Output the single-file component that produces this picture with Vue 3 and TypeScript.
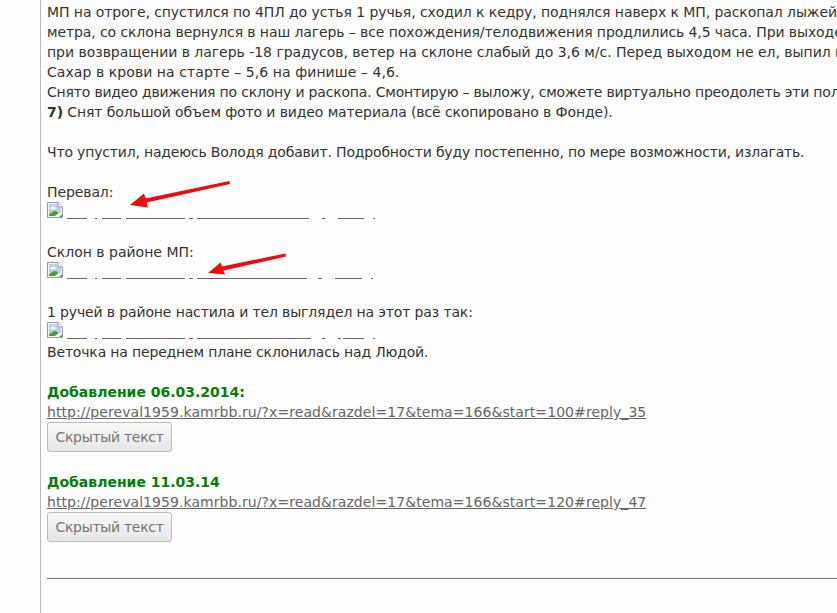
<script setup lang="ts">
type Block = { label: string; spacing: number; segs: number[][]; after?: string; afterSpacing?: number };

const intro = [
  { t: 'МП на отроге, спустился по 4ПЛ до устья 1 ручья, сходил к кедру, поднялся наверх к МП, раскопал лыжей', s: -0.08 },
  { t: 'метра, со склона вернулся в наш лагерь – все похождения/телодвижения продлились 4,5 часа. При выходе', s: -0.1 },
  { t: 'при возвращении в лагерь -18 градусов, ветер на склоне слабый до 3,6 м/с. Перед выходом не ел, выпил н', s: -0.03 },
  { t: 'Сахар в крови на старте – 5,6 на финише – 4,6.', s: 0.065 },
  { t: 'Снято видео движения по склону и раскопа. Смонтирую – выложу, сможете виртуально преодолеть эти пол', s: -0.19 },
];

const blocks: Block[] = [
  {
    label: 'Перевал:',
    spacing: -0.1,
    segs: [[20, 8], [2, 5], [19, 5], [59, 4], [4, 4], [112, 13], [3, 13], [26, 9], [2, 0]],
  },
  {
    label: 'Склон в районе МП:',
    spacing: 0,
    segs: [[20, 8], [2, 5], [19, 5], [59, 4], [4, 4], [110, 11], [4, 13], [27, 9], [2, 0]],
  },
  {
    label: '1 ручей в районе настила и тел выглядел на этот раз так:',
    spacing: -0.14,
    segs: [[20, 8], [2, 5], [19, 5], [59, 4], [4, 4], [114, 11], [3, 13], [3, 2], [21, 9], [2, 0]],
    after: 'Веточка на переднем плане склонилась над Людой.',
    afterSpacing: -0.17,
  },
];

const additions = [
  { title: 'Добавление 06.03.2014:', url: 'http://pereval1959.kamrbb.ru/?x=read&razdel=17&tema=166&start=100#reply_35' },
  { title: 'Добавление 11.03.14', url: 'http://pereval1959.kamrbb.ru/?x=read&razdel=17&tema=166&start=120#reply_47' },
];
</script>

<template>
  <main class="page">
    <article class="post">
      <p v-for="l in intro" :key="l.t" class="line" :style="{ letterSpacing: l.s + 'px' }">{{ l.t }}</p>
      <p class="line seven"><b>7)</b> Снят большой объем фото и видео материала (всё скопировано в Фонде).</p>
      <p class="line blank"></p>
      <p class="line closing">Что упустил, надеюсь Володя добавит. Подробности буду постепенно, по мере возможности, излагать.</p>

      <section v-for="b in blocks" :key="b.label" class="block">
        <p class="line" :style="{ letterSpacing: b.spacing + 'px' }">{{ b.label }}</p>
        <div class="imgrow">
          <svg class="broken" viewBox="0 0 16 16" width="16" height="16">
            <path d="M0.5 0.5H11L15.5 5V15.5H0.5Z" fill="#f4f4f4" stroke="#9a9a9a" />
            <path d="M2 2H10.5V5.5H14V11L2 13Z" fill="#b9d0f2" />
            <path d="M3 6.5C4 4 8 4 9.5 6.5C8 7.5 4 7.5 3 6.5Z" fill="#fff" />
            <path d="M2 14V12.5L6.5 9.2C8.5 8.5 10 9.5 11.5 11L8 14Z" fill="#4f9a34" />
            <path d="M12 15L15 12.5V15Z" fill="#4f9a34" />
            <path d="M11 0.5V5H15.5" fill="#fff" stroke="#9a9a9a" />
          </svg>
          <span
            v-for="(s, i) in b.segs"
            :key="i"
            class="seg"
            :style="{ width: s[0] + 'px', marginRight: s[1] + 'px' }"
          ></span>
        </div>
        <p v-if="b.after" class="line" :style="{ letterSpacing: b.afterSpacing + 'px' }">{{ b.after }}</p>
      </section>

      <section v-for="a in additions" :key="a.title" class="block">
        <p class="line added">{{ a.title }}</p>
        <p class="line"><a class="link" href="#">{{ a.url }}</a></p>
        <button class="spoiler" type="button">Скрытый текст</button>
      </section>

      <hr class="rule" />
    </article>

    <svg class="arrows" width="837" height="613" viewBox="0 0 837 613">
      <path d="M229.3 181L230 184L146.5 202.5L148 207.5L130 205L144 193.5L145.5 198.5Z" fill="#f00a0a" />
      <path d="M285.3 253.5L286 256.5L223.5 270.5L225 274.5L208 273L220.5 262.5L222 266.5Z" fill="#f00a0a" />
    </svg>
  </main>
</template>

<style scoped>
.page {
  position: relative;
  width: 837px;
  height: 613px;
  overflow: hidden;
  background: #fdfdfd;
  font-family: "DejaVu Sans", Verdana, sans-serif;
  font-size: 14px;
  line-height: 20px;
  color: #333;
}
.post {
  margin-left: 40px;
  height: 613px;
  box-sizing: border-box;
  padding: 2px 0 0 6px;
  border-left: 1px solid #bbb;
}
.block {
  margin-top: 20px;
}
.line {
  margin: 0;
  height: 20px;
  white-space: nowrap;
}
.seven {
  letter-spacing: -0.11px;
}
.closing {
  letter-spacing: -0.177px;
}
.imgrow {
  display: flex;
  align-items: flex-start;
  height: 20px;
}
.broken {
  margin-right: 4px;
  flex: none;
}
.seg {
  flex: none;
  height: 1px;
  margin-top: 16px;
  background: #666;
}
.added {
  color: #008000;
  font-weight: 700;
}
.link {
  color: #666;
  text-decoration: underline;
  letter-spacing: 0.065px;
}
.spoiler {
  display: block;
  box-sizing: border-box;
  width: 125px;
  height: 30px;
  margin: 0;
  padding: 0;
  border: 1px solid #bbb;
  border-radius: 3px;
  background: linear-gradient(#f8f8f8, #e6e6e6);
  color: #777;
  font: inherit;
  letter-spacing: -0.3px;
}
.rule {
  margin: 36px 0 0;
  border: 0;
  height: 1px;
  background: #777;
}
.arrows {
  position: absolute;
  left: 0;
  top: 0;
  pointer-events: none;
}
</style>
